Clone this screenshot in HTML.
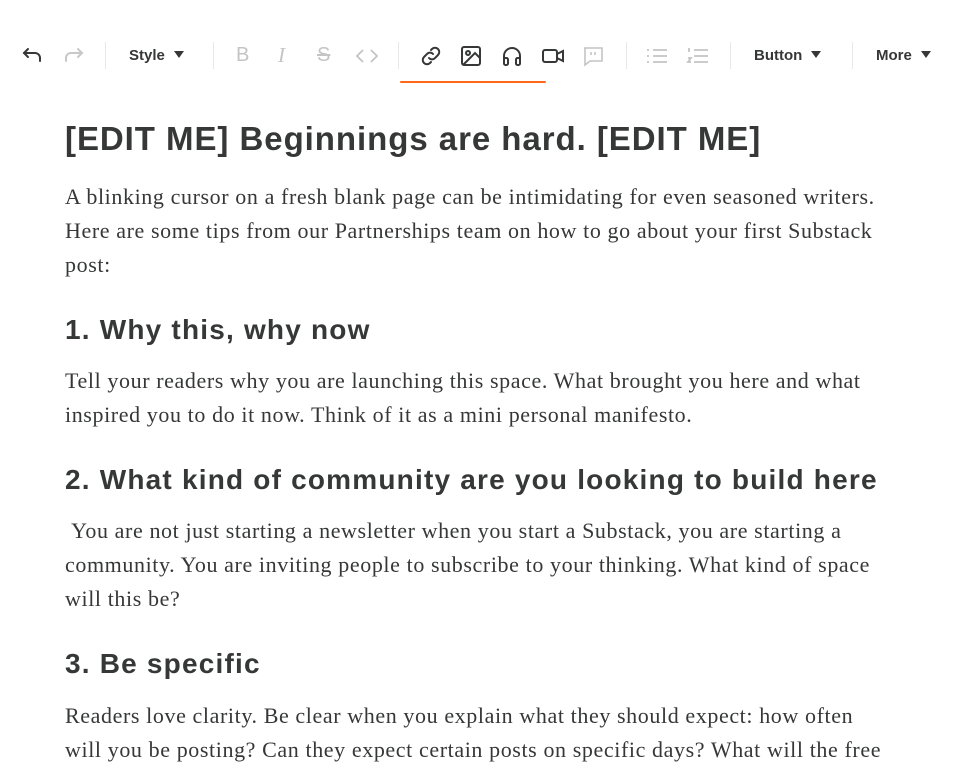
<!DOCTYPE html>
<html><head><meta charset="utf-8"><style>
body{margin:0;width:966px;height:770px;overflow:hidden;background:#fff;color:#363737;font-family:"Liberation Sans",sans-serif;position:relative}
.tb{position:absolute;top:0;left:0;width:966px;height:90px}
.ic{position:absolute;top:45px}
.sep{position:absolute;top:42px;width:1px;height:27px;background:#e8e8e8}
.lbl{position:absolute;top:47px;font-size:15px;font-weight:bold;color:#363737}
.tri{display:inline-block;margin-left:9px;width:0;height:0;border-left:5px solid transparent;border-right:5px solid transparent;border-top:7px solid #363737;vertical-align:2px}
.t{position:absolute;left:65px;white-space:nowrap}
.h1{font-size:33px;font-weight:bold;letter-spacing:0.95px}
.h2{font-size:28px;font-weight:bold;letter-spacing:1.2px}
.p{font-family:"Liberation Serif",serif;font-size:22px;letter-spacing:0.6px;line-height:34px}
</style></head><body>
<div class="tb">
<svg class="ic" style="left:20px" width="24" height="22" viewBox="0 0 24 22" fill="none" stroke="#363737" stroke-width="2" stroke-linecap="round"><path d="M4 8h11a5 5 0 0 1 5 5v3"/><path d="M8 4L4 8l4 4"/></svg>
<svg class="ic" style="left:62px" width="24" height="22" viewBox="0 0 24 22" fill="none" stroke="#c8c8c8" stroke-width="2" stroke-linecap="round"><path d="M20 8H9a5 5 0 0 0-5 5v3"/><path d="M16 4l4 4-4 4"/></svg>
<div class="sep" style="left:105px"></div>
<div class="lbl" style="left:129px">Style<span class="tri"></span></div>
<div class="sep" style="left:213px"></div>
<div class="lbl" style="left:236px;font-size:20px;top:44px;font-weight:normal;color:#c4c4c4">B</div>
<div class="lbl" style="left:278px;font-size:21px;top:43px;font-weight:normal;font-style:italic;color:#c4c4c4;font-family:'Liberation Serif',serif">I</div>
<div class="lbl" style="left:317px;font-size:20px;top:44px;font-weight:normal;color:#c4c4c4;text-decoration:line-through">S</div>
<svg class="ic" style="left:355px" width="24" height="22" viewBox="0 0 24 22" fill="none" stroke="#c4c4c4" stroke-width="1.8"><path d="M8 5l-6 6 6 6M16 5l6 6-6 6"/></svg>
<div class="sep" style="left:398px"></div>
<svg class="ic" style="left:419px" width="24" height="22" viewBox="0 0 24 22" fill="none" stroke="#363737" stroke-width="2" stroke-linecap="round"><path d="M10 13a4 4 0 0 0 6 0l3-3a4 4 0 0 0-6-6l-1 1"/><path d="M14 9a4 4 0 0 0-6 0l-3 3a4 4 0 0 0 6 6l1-1"/></svg>
<svg class="ic" style="left:460px" width="22" height="22" viewBox="0 0 22 22" fill="none" stroke="#363737" stroke-width="2"><rect x="2" y="2" width="18" height="18" rx="2"/><circle cx="8" cy="8" r="2"/><path d="M20 13l-5-5L3 20"/></svg>
<svg class="ic" style="left:501px" width="22" height="22" viewBox="0 0 22 22" fill="none" stroke="#363737" stroke-width="2"><path d="M3 17v-6a8 8 0 0 1 16 0v6"/><rect x="3" y="13" width="4" height="7" rx="1.5"/><rect x="15" y="13" width="4" height="7" rx="1.5"/></svg>
<svg class="ic" style="left:541px" width="24" height="22" viewBox="0 0 24 22" fill="none" stroke="#363737" stroke-width="2"><rect x="2" y="5" width="14" height="12" rx="2"/><path d="M16 9l6-3v10l-6-3"/></svg>
<svg class="ic" style="left:582px" width="22" height="22" viewBox="0 0 22 22" fill="none" stroke="#c4c4c4" stroke-width="1.6"><path d="M2 3h18v13H8l-5 4V3z"/><path d="M9 7v3M13 7v3"/></svg>
<div class="sep" style="left:626px"></div>
<svg class="ic" style="left:645px" width="24" height="22" viewBox="0 0 24 22" fill="none" stroke="#c4c4c4" stroke-width="1.8"><path d="M8 5h14M8 11h14M8 17h14M2 5h2M2 11h2M2 17h2"/></svg>
<svg class="ic" style="left:686px" width="24" height="22" viewBox="0 0 24 22" fill="none" stroke="#c4c4c4" stroke-width="1.8"><path d="M8 5h14M8 11h14M8 17h14M3 3v4M2 13h3l-3 4h3"/></svg>
<div class="sep" style="left:730px"></div>
<div class="lbl" style="left:754px">Button<span class="tri"></span></div>
<div class="sep" style="left:852px"></div>
<div class="lbl" style="left:876px">More<span class="tri"></span></div>
<div style="position:absolute;left:400px;top:81px;width:146px;height:2px;background:#ff6719;border-radius:1px"></div>
</div>

<div class="t h1" style="top:120px">[EDIT ME] Beginnings are hard. [EDIT ME]</div>
<div class="t p" style="top:180px">A blinking cursor on a fresh blank page can be intimidating for even seasoned writers.<br>Here are some tips from our Partnerships team on how to go about your first Substack<br>post:</div>
<div class="t h2" style="top:314px">1. Why this, why now</div>
<div class="t p" style="top:364px">Tell your readers why you are launching this space. What brought you here and what<br>inspired you to do it now. Think of it as a mini personal manifesto.</div>
<div class="t h2" style="top:464px">2. What kind of community are you looking to build here</div>
<div class="t p" style="top:514px">&nbsp;You are not just starting a newsletter when you start a Substack, you are starting a<br>community. You are inviting people to subscribe to your thinking. What kind of space<br>will this be?</div>
<div class="t h2" style="top:648px">3. Be specific</div>
<div class="t p" style="top:699px">Readers love clarity. Be clear when you explain what they should expect: how often<br>will you be posting? Can they expect certain posts on specific days? What will the free</div>
</body></html>
